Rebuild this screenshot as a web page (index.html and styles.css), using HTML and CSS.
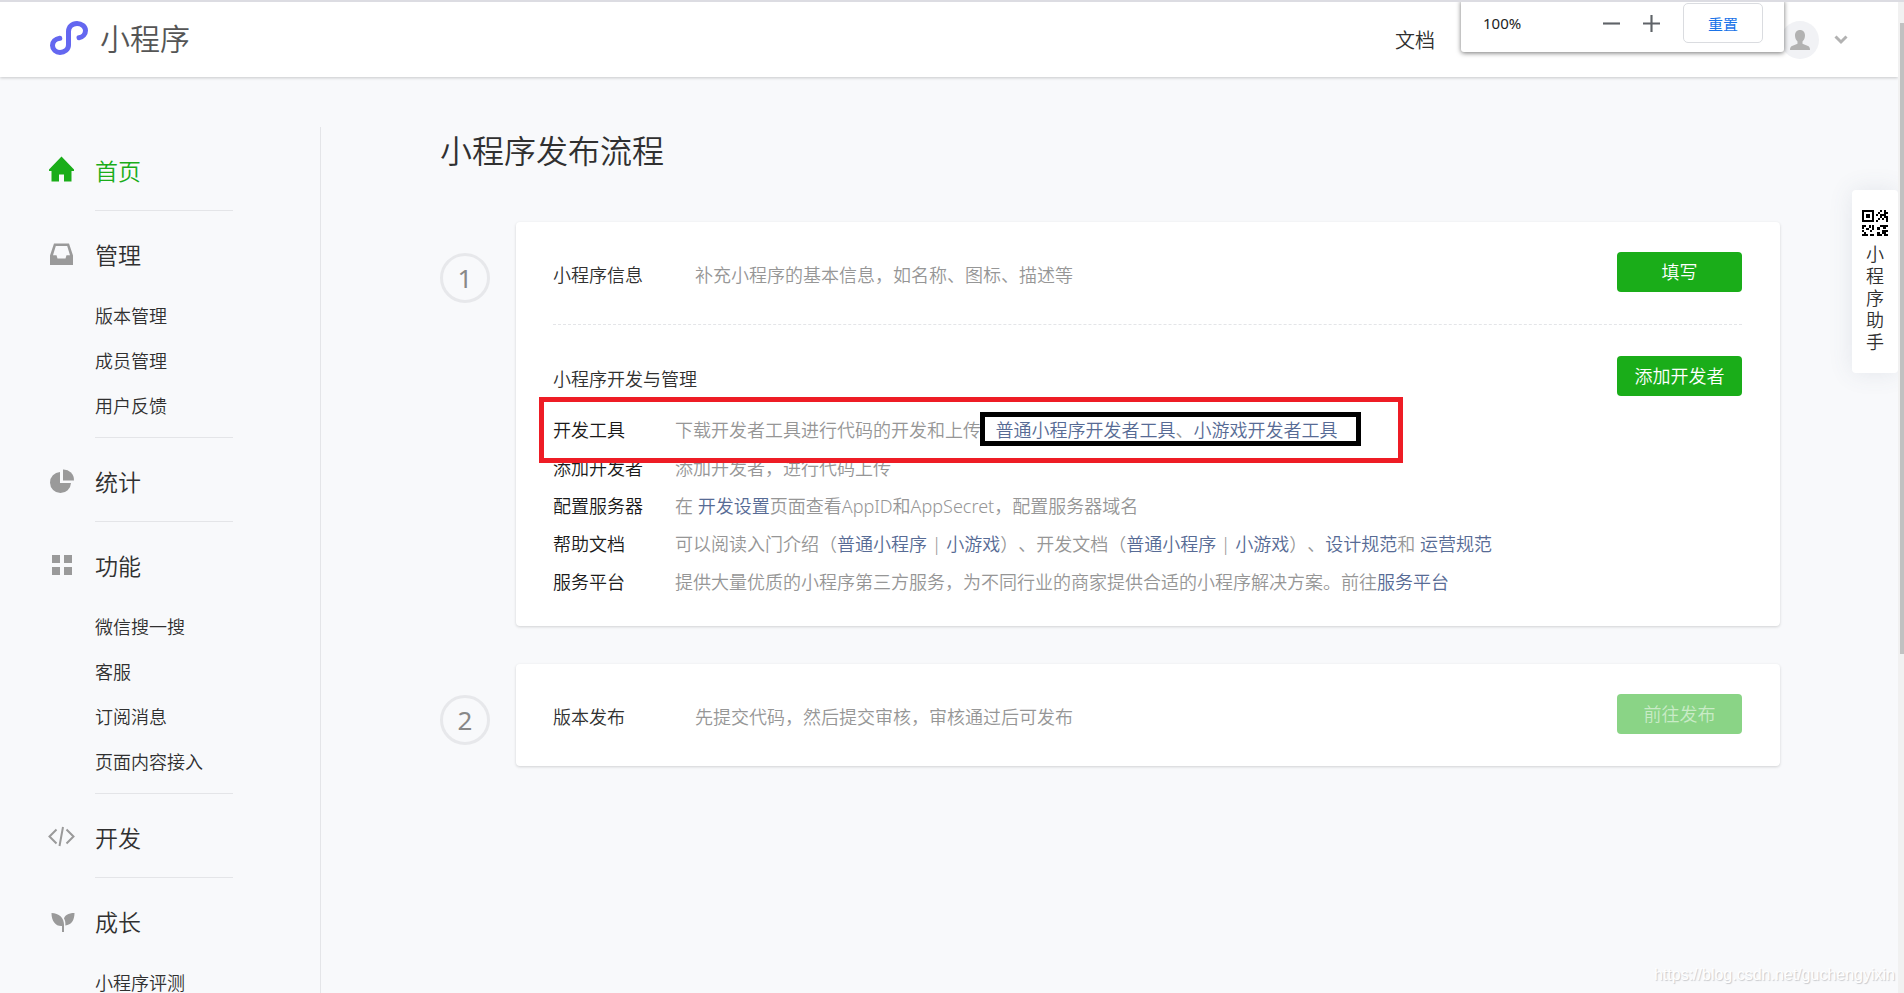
FILE: index.html
```html
<!DOCTYPE html>
<html lang="zh-CN">
<head>
<meta charset="utf-8">
<meta name="viewport" content="width=device-width, initial-scale=1">
<title>小程序</title>
<link rel="stylesheet" href="styles.css">
</head>
<body>
<div class="window">
  <div class="page">
    <header class="header">
      <a class="logo" href="#">
        <svg class="logo-mark" viewBox="0 0 40 36" aria-hidden="true"><path d="M10.800 17.300C6 18 3.500 21 3.500 24.500C3.500 28.500 7 31.500 11 31.500C15.500 31.500 19.500 28.500 19.500 24V10.500C19.500 6 23 2.500 28 2.500C32.500 2.500 36.500 5.500 36.500 9.500C36.500 13 34 16.200 30 16.700"/></svg>
        <span>小程序</span>
      </a>
      <nav class="header-nav">
        <a class="docs" href="#">文档</a>
        <button class="account" type="button" aria-label="账号">
          <svg class="avatar" viewBox="0 0 38 38" aria-hidden="true"><circle cx="19" cy="19" r="19" fill="#f1f2f5"/><path fill="#b2b2b2" d="M19 9c3 0 5 2.200 5 5.500 0 2.500-1 4.500-2.500 6v2.300l5.500 2.200c1.300.6 2 2 2 4H9c0-2 .7-3.400 2-4l5.500-2.200v-2.300c-1.500-1.500-2.500-3.500-2.500-6C14 11.200 16 9 19 9z"/></svg>
          <svg class="chevron" viewBox="0 0 14 10" aria-hidden="true"><path d="M1.500 1.500L7 7l5.500-5.500"/></svg>
        </button>
      </nav>
    </header>

    <div class="layout">
      <aside class="sidebar">
        <ul class="menu">
          <li class="group">
            <a class="group-title active" href="#"><svg class="icon" viewBox="0 0 28 28" aria-hidden="true"><path d="M14.500-.5L2 12.500V14h2.500v10.500H12v-7h5v7h7.500V14H27v-1.500z"/></svg>首页</a>
          </li>
          <li class="group">
            <a class="group-title" href="#"><svg class="icon" viewBox="0 0 28 28" aria-hidden="true"><path fill-rule="evenodd" d="M7 2.500h15l4 12V24H3v-9.500zM8.800 5L6 14.200h3.500l1 3.300h8l1-3.300H23L20.200 5z"/></svg>管理</a>
            <ul class="submenu">
              <li><a href="#">版本管理</a></li>
              <li><a href="#">成员管理</a></li>
              <li><a href="#">用户反馈</a></li>
            </ul>
          </li>
          <li class="group">
            <a class="group-title" href="#"><svg class="icon" viewBox="0 0 28 28" aria-hidden="true"><path d="M13 4v11h11A10.500 10.500 0 1 1 13 4z"/><path d="M16 1.500A10.500 10.500 0 0 1 27 12.500H16z"/></svg>统计</a>
          </li>
          <li class="group">
            <a class="group-title" href="#"><svg class="icon" viewBox="0 0 28 28" aria-hidden="true"><path d="M5 3h8v8H5zM17 3h8v8h-8zM5 15h8v8H5zM17 15h8v8h-8z"/></svg>功能</a>
            <ul class="submenu">
              <li><a href="#">微信搜一搜</a></li>
              <li><a href="#">客服</a></li>
              <li><a href="#">订阅消息</a></li>
              <li><a href="#">页面内容接入</a></li>
            </ul>
          </li>
          <li class="group">
            <a class="group-title" href="#"><svg class="icon outline" viewBox="0 0 28 28" aria-hidden="true"><path d="M9.500 5.500L2.500 12.500l7 7M19.500 5.500l7 7-7 7M16 3l-3.500 19"/></svg>开发</a>
          </li>
          <li class="group">
            <a class="group-title" href="#"><svg class="icon" viewBox="0 0 28 28" aria-hidden="true"><path d="M4.500 5C12 5 17 10 17 16.500V24h-2v-6C9 18.500 4.500 13.500 4.500 5z"/><path d="M27.500 5C21 5 17.500 7.500 17 10.500c1.200 2 1.600 4.500 1.300 7C24.500 17 27.500 12 27.500 5z"/></svg>成长</a>
            <ul class="submenu">
              <li><a href="#">小程序评测</a></li>
            </ul>
          </li>
        </ul>
      </aside>

      <main class="main">
        <h1 class="title">小程序发布流程</h1>
        <ol class="steps">
          <li class="step">
            <span class="step-number">1</span>
            <div class="card">
              <section class="section">
                <h2 class="section-name">小程序信息</h2>
                <p class="section-text">补充小程序的基本信息，如名称、图标、描述等</p>
                <button class="button" type="button">填写</button>
              </section>
              <section class="section">
                <h2 class="section-name wide">小程序开发与管理</h2>
                <button class="button" type="button">添加开发者</button>
                <dl class="details">
                  <div class="detail marked">
                    <dt>开发工具</dt>
                    <dd>下载开发者工具进行代码的开发和上传:<a class="tool-link" href="#">普通小程序开发者工具</a>、<a href="#">小游戏开发者工具</a></dd>
                    <span class="mark mark-row"></span>
                    <span class="mark mark-links"></span>
                  </div>
                  <div class="detail">
                    <dt>添加开发者</dt>
                    <dd>添加开发者，进行代码上传</dd>
                  </div>
                  <div class="detail">
                    <dt>配置服务器</dt>
                    <dd>在 <a href="#">开发设置</a>页面查看AppID和AppSecret，配置服务器域名</dd>
                  </div>
                  <div class="detail">
                    <dt>帮助文档</dt>
                    <dd>可以阅读入门介绍（<a href="#">普通小程序</a> | <a href="#">小游戏</a>）、开发文档（<a href="#">普通小程序</a> | <a href="#">小游戏</a>）、<a href="#">设计规范</a>和 <a href="#">运营规范</a></dd>
                  </div>
                  <div class="detail">
                    <dt>服务平台</dt>
                    <dd>提供大量优质的小程序第三方服务，为不同行业的商家提供合适的小程序解决方案。前往<a href="#">服务平台</a></dd>
                  </div>
                </dl>
              </section>
            </div>
          </li>
          <li class="step">
            <span class="step-number">2</span>
            <div class="card">
              <section class="section">
                <h2 class="section-name">版本发布</h2>
                <p class="section-text">先提交代码，然后提交审核，审核通过后可发布</p>
                <button class="button" type="button" disabled>前往发布</button>
              </section>
            </div>
          </li>
        </ol>
      </main>
    </div>

    <a class="helper" href="#">
      <svg class="qr" viewBox="0 0 26 26" aria-hidden="true"><path fill-rule="evenodd" d="M0 0h12v12H0zM2 2v8h8V2zM4 4h4v4H4z"/><path d="M18 0h2v2h-2zM22 0h2v2h2v2h-2v2h2v6h-2V8h-2V6h-2V4h2zM16 2h2v2h-2zM14 4h2v2h-2zM18 4h2v4h-2zM16 8h2v2h-2zM14 10h2v2h-2zM20 8h2v2h-2zM0 15h4v2H2v2H0zM7 15h2v3H7v2H4v-2h3zM10 15h2v5h-2v2H8v-2h2zM0 20h2v2h2v2h2v2H0v-2h2v-2H0zM8 24h4v2H8zM18 15h8v2h-2v2h-3v-2h-3zM15 17h3v3h-3zM20 20h6v2h-2v2h2v2h-4v-2h-2zM15 22h3v2h2v2h-5z"/></svg>
      <span class="helper-text">小程序助手</span>
    </a>
    <div class="zoom-bubble">
      <span class="zoom-value">100%</span>
      <button class="zoom-step" type="button" aria-label="缩小"><svg viewBox="0 0 16 16" aria-hidden="true"><path d="M0 8h16"/></svg></button>
      <button class="zoom-step" type="button" aria-label="放大"><svg viewBox="0 0 16 16" aria-hidden="true"><path d="M0 8h16M8 0v16"/></svg></button>
      <button class="zoom-reset" type="button">重置</button>
    </div>
    <span class="watermark">https://blog.csdn.net/guchengyixin</span>
  </div>
  <div class="scrollbar"><div class="scroll-thumb"></div></div>
</div>
</body>
</html>
```
FILE: styles.css
```css
* { box-sizing: border-box; }

body {
  margin: 0;
  background: #f8f9fb;
  color: #303030;
  font-family: "Noto Sans", "Noto Sans CJK SC", sans-serif;
  font-size: 18px;
  font-weight: 350;
  text-spacing-trim: space-all;
}

h1, h2, p, ul, ol, dl, dd { margin: 0; padding: 0; font-weight: inherit; }
ul, ol { list-style: none; }
a { color: inherit; text-decoration: none; }
button { padding: 0; border: 0; background: none; font: inherit; color: inherit; cursor: pointer; }

.window {
  display: grid;
  grid-template-columns: minmax(0, 1fr) 6px;
  height: 100vh;
  overflow: hidden;
  border-top: 2px solid #dcdce2;
}
.page { position: relative; overflow: hidden; }

/* Header */
.header {
  display: flex;
  align-items: center;
  justify-content: space-between;
  height: 75px;
  padding: 0 50px 0 49px;
  background: #fff;
  box-shadow: 0 1px 3px rgba(0, 0, 0, 0.2);
}
.logo { display: flex; align-items: center; gap: 11px; padding-bottom: 2px; font-size: 30px; line-height: 40px; color: #555; }
.logo-mark { width: 40px; height: 36px; fill: none; stroke: #6467f0; stroke-width: 5; stroke-linecap: round; }
.header-nav { display: flex; align-items: center; gap: 346px; }
.docs { font-size: 20px; }
.account { display: flex; align-items: center; gap: 15px; }
.avatar { width: 38px; height: 38px; }
.chevron { width: 14px; height: 10px; fill: none; stroke: #b2b2b2; stroke-width: 3; }

/* Layout */
.layout { display: flex; padding-top: 50px; }
.sidebar { flex: 0 0 321px; min-height: 100vh; border-right: 1px solid #e4e5e8; }
.group { position: relative; padding-bottom: 1px; }
.group::after {
  content: "";
  display: block;
  height: 1px;
  margin: 0 87px -1px 95px;
  background: #e4e5e8;
}
.group-title {
  display: flex;
  align-items: center;
  gap: 20px;
  padding: 28px 0 23px 47px;
  font-size: 23px;
  line-height: 32px;
}
.icon { width: 28px; height: 28px; overflow: visible; fill: #9a9a9a; }
.icon.outline { fill: none; stroke: #9a9a9a; stroke-width: 2; }
.active { color: #1aad19; }
.active .icon { fill: #1aad19; }
.submenu { padding: 0 0 8px 95px; line-height: 45px; }

.main { flex: 1; min-width: 0; padding: 0 118px 0 119px; }
.title { font-size: 32px; line-height: 48px; }
.steps { display: flex; flex-direction: column; gap: 38px; padding-top: 47px; }
.step { display: flex; align-items: flex-start; gap: 26px; }
.step-number {
  flex: none;
  width: 50px;
  height: 50px;
  margin-top: 31px;
  border: 3px solid #e7e8eb;
  border-radius: 50%;
  font-size: 26px;
  font-weight: 400;
  line-height: 44px;
  text-align: center;
  color: #888;
}
.card {
  flex: 1;
  min-width: 0;
  padding: 0 38px 0 37px;
  border-radius: 4px;
  background: #fff;
  box-shadow: 0 1px 3px rgba(0, 0, 0, 0.16);
}
.section { display: flex; flex-wrap: wrap; padding: 30px 0 26px; line-height: 46px; }
.section + .section { padding: 31px 0 25px; border-top: 1px dashed #e4e5e8; }
.section-name { flex: 0 0 142px; font-size: 18px; }
.section-name.wide { flex: 1; }
.section-text { flex: 1; color: #969696; }
.button {
  width: 125px;
  height: 40px;
  border-radius: 4px;
  background: #1aad19;
  color: #fff;
  line-height: 38px;
}
.button:disabled { background: #8ad486; color: #c9ebc7; }

.details { flex: 0 0 100%; padding-top: 9px; line-height: 38px; }
.detail { display: flex; }
.detail dt { flex: 0 0 122px; color: #1a1a1a; }
.detail dd { color: #969696; }
.detail a { color: #576b95; }
.detail .tool-link { margin-left: 10px; }

/* Highlight frames over the tools row */
.marked { position: relative; }
.mark { position: absolute; pointer-events: none; }
.mark-row { left: -14px; top: -14px; width: 864px; height: 66px; border: 5px solid #ee1c25; }
.mark-links { left: 427px; top: 1px; width: 381px; height: 34px; border: 5px solid #000; }

/* Floating parts */
.helper {
  position: absolute;
  top: 188px;
  right: 0;
  display: flex;
  flex-direction: column;
  align-items: center;
  gap: 7px;
  width: 46px;
  padding: 20px 0;
  border-radius: 4px;
  background: #fff;
  box-shadow: 0 0 24px rgba(70, 90, 120, 0.12);
  line-height: 22px;
}
.qr { width: 26px; height: 26px; fill: #000; }
.helper-text { width: 18px; }

.zoom-bubble {
  position: absolute;
  top: -2px;
  right: 114px;
  display: flex;
  align-items: center;
  width: 323px;
  height: 52px;
  padding: 0 21px 6px 22px;
  border-radius: 0 0 3px 3px;
  background: #fff;
  box-shadow: 0 1px 5px rgba(0, 0, 0, 0.55);
  font-size: 15px;
  font-weight: 400;
  color: #222;
}
.zoom-value { flex: 1; }
.zoom-step { display: flex; margin-right: 23px; }
.zoom-step svg { width: 17px; height: 17px; stroke: #5f6368; stroke-width: 2; }
.zoom-reset {
  width: 80px;
  height: 40px;
  border: 1px solid #dadce0;
  border-radius: 5px;
  color: #1a73e8;
}

.watermark {
  position: absolute;
  right: 3px;
  bottom: 7px;
  font: 400 16px/22px "Liberation Sans", sans-serif;
  color: #fff;
  text-shadow: 1px 1px 1px #c8c9cc;
}

.scrollbar { padding: 21px 0 0 2px; background: #f1f1f1; }
.scroll-thumb { height: 65%; background: #c1c1c1; }
```
